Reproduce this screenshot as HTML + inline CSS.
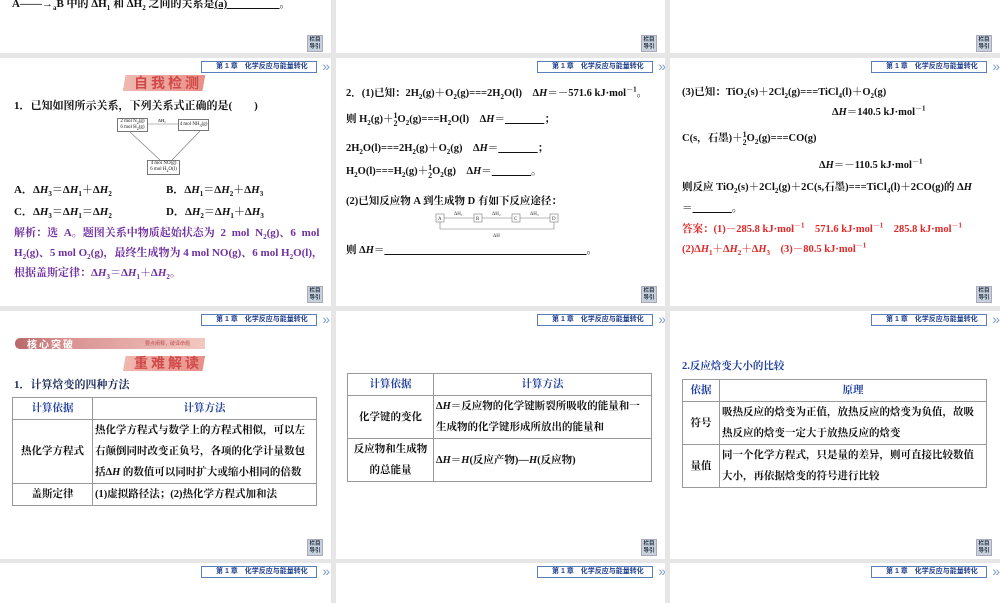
<!DOCTYPE html>
<html><head><meta charset="utf-8">
<style>
*{margin:0;padding:0;box-sizing:border-box}
body{width:1000px;height:600px;background:#e6e6e6;position:relative;overflow:hidden;font-family:"Liberation Serif","Noto Serif CJK SC",serif;font-weight:bold;color:#111;font-size:11px}
.p{position:absolute;background:#fff;overflow:hidden}
.a{position:absolute;white-space:nowrap}
.hd{position:absolute;left:201px;top:3px;width:116px;height:12px;border:1px solid #5a7fb8;font-size:7px;color:#1f3f8f;line-height:10px;padding-left:14px;font-family:"Liberation Sans","Noto Sans CJK SC",sans-serif}
.hd:after{content:"»";position:absolute;right:-14px;top:-3px;font-size:14px;line-height:14px;color:#7aa0d0;font-weight:normal}
.bt{position:absolute;right:8px;width:16px;height:17px;background:#c8d0dc;border:1px solid #aab;font-size:5.5px;color:#234;line-height:7px;text-align:center;padding-top:1px;font-family:"Liberation Sans","Noto Sans CJK SC",sans-serif}
sub,sup{font-size:7px;line-height:0}
.pu{color:#7030a0}.rd{color:#e02828}.bl{color:#1f3fa0}
table{position:absolute;border-collapse:collapse;font-size:10.5px}
td{border:1px solid #999;padding:0 2px;line-height:21px;vertical-align:middle}
.fr{display:inline-block;vertical-align:middle;text-align:center;font-size:8px;line-height:8px}
.bx{position:absolute;border:1px solid #777;font-size:5px;line-height:6px;text-align:center;font-weight:normal;background:#fff}
</style></head><body>

<!-- Row1 -->
<div class="p" style="left:0;top:0;width:331px;height:53px">
<div class="a" style="left:12px;top:-5px;font-size:11px">A——→<sub>a</sub>B 中的 ΔH<sub>1</sub> 和 ΔH<sub>2</sub> 之间的关系是<u>(a)&nbsp;&nbsp;&nbsp;&nbsp;&nbsp;&nbsp;&nbsp;&nbsp;&nbsp;&nbsp;&nbsp;&nbsp;&nbsp;&nbsp;&nbsp;&nbsp;&nbsp;&nbsp;&nbsp;</u>。</div>
<div class="bt" style="top:35px">栏目<br>导引</div></div>
<div class="p" style="left:336px;top:0;width:329px;height:53px"><div class="bt" style="top:35px">栏目<br>导引</div></div>
<div class="p" style="left:670px;top:0;width:330px;height:53px"><div class="bt" style="top:35px">栏目<br>导引</div></div>

<!-- Row2 col1 -->
<div class="p" style="left:0;top:58px;width:331px;height:248px">
<div class="hd">第 1 章　化学反应与能量转化</div>
<div class="a" style="left:118px;top:17px;width:92px;height:16px;background:linear-gradient(100deg,transparent 8%,#f0b8b0 8%,#e89088 92%,transparent 92%);"></div>
<div class="a" style="left:134px;top:15px;font-size:14px;color:#d04848;letter-spacing:3px;font-family:'Liberation Sans','Noto Sans CJK SC',sans-serif">自我检测</div>
<div class="a" style="left:14px;top:39px">1．已知如图所示关系，下列关系式正确的是(　　)</div>
<div class="bx" style="left:117px;top:60px;width:31px;height:14px">2 mol N<sub style="font-size:4px">2</sub>(g)<br>6 mol H<sub style="font-size:4px">2</sub>(g)</div>
<div class="bx" style="left:178px;top:61px;width:31px;height:12px;line-height:10px">4 mol NH<sub style="font-size:4px">3</sub>(g)</div>
<div class="bx" style="left:147px;top:102px;width:33px;height:15px">4 mol NO(g)<br>6 mol H<sub style="font-size:4px">2</sub>O(l)</div>
<svg class="a" style="left:0;top:0" width="331" height="248"><g stroke="#777" stroke-width=".6"><line x1="148" y1="66" x2="178" y2="66"/><line x1="130" y1="74" x2="160" y2="102"/><line x1="200" y1="73" x2="172" y2="102"/></g><text x="158" y="64" font-size="4.5" fill="#444">ΔH₁</text></svg>
<div class="a" style="left:14px;top:123px">A．Δ<i>H</i><sub>3</sub>＝Δ<i>H</i><sub>1</sub>＋Δ<i>H</i><sub>2</sub></div>
<div class="a" style="left:166px;top:123px">B．Δ<i>H</i><sub>1</sub>＝Δ<i>H</i><sub>2</sub>＋Δ<i>H</i><sub>3</sub></div>
<div class="a" style="left:14px;top:145px">C．Δ<i>H</i><sub>3</sub>＝Δ<i>H</i><sub>1</sub>＝Δ<i>H</i><sub>2</sub></div>
<div class="a" style="left:166px;top:145px">D．Δ<i>H</i><sub>2</sub>＝Δ<i>H</i><sub>1</sub>＋Δ<i>H</i><sub>3</sub></div>
<div class="a pu" style="left:14px;top:166px;word-spacing:3px">解析：选 A。题图关系中物质起始状态为 2 mol N<sub>2</sub>(g)、6 mol</div>
<div class="a pu" style="left:14px;top:186px">H<sub>2</sub>(g)、5 mol O<sub>2</sub>(g)，最终生成物为 4 mol NO(g)、6 mol H<sub>2</sub>O(l)，</div>
<div class="a pu" style="left:14px;top:206px">根据盖斯定律：Δ<i>H</i><sub>3</sub>＝Δ<i>H</i><sub>1</sub>＋Δ<i>H</i><sub>2</sub>。</div>
<div class="bt" style="top:228px">栏目<br>导引</div></div>

<!-- Row2 col2 -->
<div class="p" style="left:336px;top:58px;width:329px;height:248px">
<div class="hd">第 1 章　化学反应与能量转化</div>
<div class="a" style="left:10px;top:27px;font-size:10.5px">2．(1)已知：2H<sub>2</sub>(g)＋O<sub>2</sub>(g)===2H<sub>2</sub>O(l)　Δ<i>H</i>＝－571.6 kJ·mol<sup>－1</sup>。</div>
<div class="a" style="left:10px;top:53px;font-size:10.5px">则 H<sub>2</sub>(g)＋<span class="fr">1<br>2</span>O<sub>2</sub>(g)===H<sub>2</sub>O(l)　Δ<i>H</i>＝<u>&nbsp;&nbsp;&nbsp;&nbsp;&nbsp;&nbsp;&nbsp;&nbsp;&nbsp;&nbsp;&nbsp;&nbsp;&nbsp;&nbsp;&nbsp;</u>；</div>
<div class="a" style="left:10px;top:82px;font-size:10.5px">2H<sub>2</sub>O(l)===2H<sub>2</sub>(g)＋O<sub>2</sub>(g)　Δ<i>H</i>＝<u>&nbsp;&nbsp;&nbsp;&nbsp;&nbsp;&nbsp;&nbsp;&nbsp;&nbsp;&nbsp;&nbsp;&nbsp;&nbsp;&nbsp;&nbsp;</u>；</div>
<div class="a" style="left:10px;top:105px;font-size:10.5px">H<sub>2</sub>O(l)===H<sub>2</sub>(g)＋<span class="fr">1<br>2</span>O<sub>2</sub>(g)　Δ<i>H</i>＝<u>&nbsp;&nbsp;&nbsp;&nbsp;&nbsp;&nbsp;&nbsp;&nbsp;&nbsp;&nbsp;&nbsp;&nbsp;&nbsp;&nbsp;&nbsp;</u>。</div>
<div class="a" style="left:10px;top:135px;font-size:10.5px">(2)已知反应物 A 到生成物 D 有如下反应途径：</div>
<svg class="a" style="left:0;top:150px" width="329" height="40"><g stroke="#777" stroke-width=".6" fill="#fff"><rect x="100" y="6" width="8" height="8"/><rect x="138" y="6" width="8" height="8"/><rect x="176" y="6" width="8" height="8"/><rect x="214" y="6" width="8" height="8"/><line x1="108" y1="10" x2="138" y2="10"/><line x1="146" y1="10" x2="176" y2="10"/><line x1="184" y1="10" x2="214" y2="10"/><polyline points="104,14 104,21 218,21 218,14" fill="none"/></g><g font-size="5" fill="#333" font-weight="normal"><text x="102" y="12">A</text><text x="140" y="12">B</text><text x="178" y="12">C</text><text x="216" y="12">D</text><text x="118" y="7">ΔH₁</text><text x="156" y="7">ΔH₂</text><text x="194" y="7">ΔH₃</text><text x="157" y="29">ΔH</text></g></svg>
<div class="a" style="left:10px;top:184px;font-size:10.5px">则 Δ<i>H</i>＝<u>&nbsp;&nbsp;&nbsp;&nbsp;&nbsp;&nbsp;&nbsp;&nbsp;&nbsp;&nbsp;&nbsp;&nbsp;&nbsp;&nbsp;&nbsp;&nbsp;&nbsp;&nbsp;&nbsp;&nbsp;&nbsp;&nbsp;&nbsp;&nbsp;&nbsp;&nbsp;&nbsp;&nbsp;&nbsp;&nbsp;&nbsp;&nbsp;&nbsp;&nbsp;&nbsp;&nbsp;&nbsp;&nbsp;&nbsp;&nbsp;&nbsp;&nbsp;&nbsp;&nbsp;&nbsp;&nbsp;&nbsp;&nbsp;&nbsp;&nbsp;&nbsp;&nbsp;&nbsp;&nbsp;&nbsp;&nbsp;&nbsp;&nbsp;&nbsp;&nbsp;&nbsp;&nbsp;&nbsp;&nbsp;&nbsp;&nbsp;&nbsp;&nbsp;&nbsp;&nbsp;&nbsp;&nbsp;&nbsp;&nbsp;&nbsp;&nbsp;&nbsp;</u>。</div>
<div class="bt" style="top:228px">栏目<br>导引</div></div>

<!-- Row2 col3 -->
<div class="p" style="left:670px;top:58px;width:330px;height:248px">
<div class="hd">第 1 章　化学反应与能量转化</div>
<div class="a" style="left:12px;top:26px;font-size:10.5px">(3)已知：TiO<sub>2</sub>(s)＋2Cl<sub>2</sub>(g)===TiCl<sub>4</sub>(l)＋O<sub>2</sub>(g)</div>
<div class="a" style="left:162px;top:46px;font-size:10.5px">Δ<i>H</i>＝140.5 kJ·mol<sup>－1</sup></div>
<div class="a" style="left:12px;top:72px;font-size:10.5px">C(s，石墨)＋<span class="fr">1<br>2</span>O<sub>2</sub>(g)===CO(g)</div>
<div class="a" style="left:149px;top:99px;font-size:10.5px">Δ<i>H</i>＝－110.5 kJ·mol<sup>－1</sup></div>
<div class="a" style="left:12px;top:121px;font-size:10.5px">则反应 TiO<sub>2</sub>(s)＋2Cl<sub>2</sub>(g)＋2C(s,石墨)===TiCl<sub>4</sub>(l)＋2CO(g)的 Δ<i>H</i></div>
<div class="a" style="left:12px;top:142px;font-size:10.5px">＝<u>&nbsp;&nbsp;&nbsp;&nbsp;&nbsp;&nbsp;&nbsp;&nbsp;&nbsp;&nbsp;&nbsp;&nbsp;&nbsp;&nbsp;&nbsp;</u>。</div>
<div class="a rd" style="left:12px;top:163px;font-size:10.5px">答案：(1)－285.8 kJ·mol<sup>－1</sup>　571.6 kJ·mol<sup>－1</sup>　285.8 kJ·mol<sup>－1</sup></div>
<div class="a rd" style="left:12px;top:183px;font-size:10.5px">(2)Δ<i>H</i><sub>1</sub>＋Δ<i>H</i><sub>2</sub>＋Δ<i>H</i><sub>3</sub>　(3)－80.5 kJ·mol<sup>－1</sup></div>
<div class="bt" style="top:228px">栏目<br>导引</div></div>

<!-- Row3 col1 -->
<div class="p" style="left:0;top:311px;width:331px;height:248px">
<div class="hd">第 1 章　化学反应与能量转化</div>
<div class="a" style="left:15px;top:27px;width:190px;height:11px;background:linear-gradient(90deg,#b86868 0,#d89090 25%,#f2c8c0 100%);border-radius:5px 0 0 5px"></div>
<div class="a" style="left:27px;top:25px;font-size:10px;color:#fff;letter-spacing:2px;font-family:'Liberation Sans','Noto Sans CJK SC',sans-serif">核心突破</div>
<div class="a" style="left:145px;top:29px;font-size:5px;color:#c05050;font-weight:normal;font-family:'Liberation Sans','Noto Sans CJK SC',sans-serif">要点阐释，破译命题</div>
<div class="a" style="left:118px;top:45px;width:92px;height:15px;background:linear-gradient(100deg,transparent 8%,#f0b8b0 8%,#e89088 92%,transparent 92%);"></div>
<div class="a" style="left:134px;top:42px;font-size:14px;color:#d04848;letter-spacing:3px;font-family:'Liberation Sans','Noto Sans CJK SC',sans-serif">重难解读</div>
<div class="a" style="left:14px;top:65px;font-size:11px;color:#1a2a5a">1．计算焓变的四种方法</div>
<table style="left:12px;top:86px;width:305px"><tr><td class="bl" style="width:80px;text-align:center">计算依据</td><td class="bl" style="text-align:center">计算方法</td></tr>
<tr><td style="text-align:center">热化学方程式</td><td>热化学方程式与数学上的方程式相似，可以左右颠倒同时改变正负号，各项的化学计量数包括Δ<i>H</i> 的数值可以同时扩大或缩小相同的倍数</td></tr>
<tr><td style="text-align:center">盖斯定律</td><td>(1)虚拟路径法；(2)热化学方程式加和法</td></tr></table>
<div class="bt" style="top:228px">栏目<br>导引</div></div>

<!-- Row3 col2 -->
<div class="p" style="left:336px;top:311px;width:329px;height:248px">
<div class="hd">第 1 章　化学反应与能量转化</div>
<table style="left:11px;top:62px;width:305px"><tr><td class="bl" style="width:86px;text-align:center">计算依据</td><td class="bl" style="text-align:center">计算方法</td></tr>
<tr><td style="text-align:center">化学键的变化</td><td>Δ<i>H</i>＝反应物的化学键断裂所吸收的能量和一生成物的化学键形成所放出的能量和</td></tr>
<tr><td style="text-align:center">反应物和生成物的总能量</td><td>Δ<i>H</i>＝<i>H</i>(反应产物)—<i>H</i>(反应物)</td></tr></table>
<div class="bt" style="top:228px">栏目<br>导引</div></div>

<!-- Row3 col3 -->
<div class="p" style="left:670px;top:311px;width:330px;height:248px">
<div class="hd">第 1 章　化学反应与能量转化</div>
<div class="a bl" style="left:12px;top:47px;font-size:10.5px">2.反应焓变大小的比较</div>
<table style="left:12px;top:68px;width:305px"><tr><td class="bl" style="width:37px;text-align:center">依据</td><td class="bl" style="text-align:center">原理</td></tr>
<tr><td style="text-align:center">符号</td><td>吸热反应的焓变为正值，放热反应的焓变为负值，故吸热反应的焓变一定大于放热反应的焓变</td></tr>
<tr><td style="text-align:center">量值</td><td>同一个化学方程式，只是量的差异，则可直接比较数值大小，再依据焓变的符号进行比较</td></tr></table>
<div class="bt" style="top:228px">栏目<br>导引</div></div>

<!-- Row4 -->
<div class="p" style="left:0;top:563px;width:331px;height:40px"><div class="hd">第 1 章　化学反应与能量转化</div></div>
<div class="p" style="left:336px;top:563px;width:329px;height:40px"><div class="hd">第 1 章　化学反应与能量转化</div></div>
<div class="p" style="left:670px;top:563px;width:330px;height:40px"><div class="hd">第 1 章　化学反应与能量转化</div></div>
</body></html>
